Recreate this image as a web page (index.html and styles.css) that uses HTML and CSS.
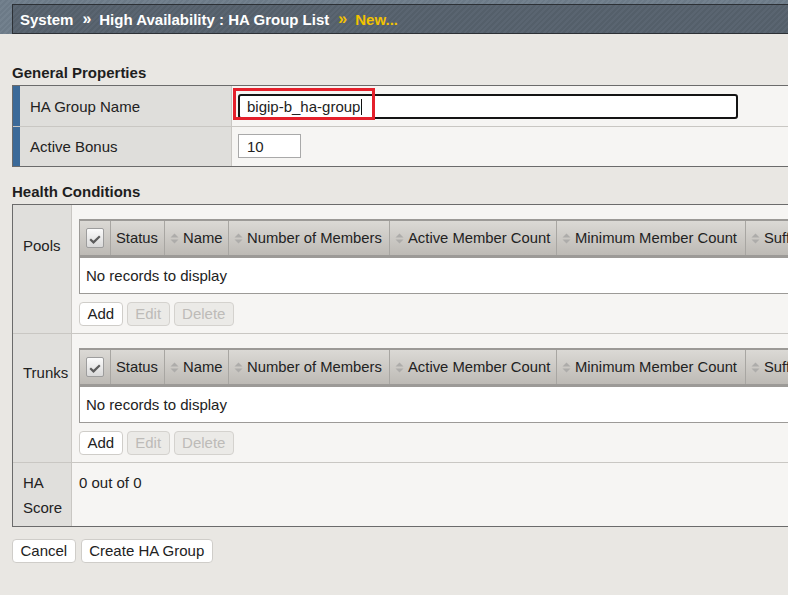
FILE: index.html
```html
<!DOCTYPE html>
<html lang="en">
<head>
<meta charset="utf-8">
<title>HA Group List - New</title>
<link rel="stylesheet" href="styles.css">
</head>
<body>
<header class="topbar">
  <nav class="crumbs">
    <span>System</span><span class="sep">»</span><span>High Availability : HA Group List</span><span class="sep cur">»</span><span class="cur">New...</span>
  </nav>
</header>

<main class="content">
  <h2 class="section first">General Properties</h2>
  <div class="props">
    <div class="prow r1">
      <div class="plabel">HA Group Name</div>
      <div class="pvalue">
        <div class="field wide"><span>bigip-b_ha-group</span><span class="caret"></span></div>
        <div class="highlight"></div>
      </div>
    </div>
    <div class="prow r2">
      <div class="plabel">Active Bonus</div>
      <div class="pvalue">
        <div class="field small">10</div>
      </div>
    </div>
  </div>

  <h2 class="section">Health Conditions</h2>
  <div class="health">
    <div class="hrow">
      <div class="hlabel">Pools</div>
      <div class="hvalue">
        <div class="grid">
          <div class="ghead">
            <div class="gcell c1"><span class="cbox"><svg width="12" height="9" viewBox="0 0 12 9"><path d="M1.2 4.2 L4.5 7.4 L10.8 1.2" fill="none" stroke="#5c5c5c" stroke-width="2.2"/></svg></span></div>
            <div class="gcell c2">Status</div>
            <div class="gcell c3"><svg class="sort" width="9" height="11" viewBox="0 0 9 11"><path d="M0.5 4.5 L4.5 0.5 L8.5 4.5 Z M0.5 6.5 L4.5 10.5 L8.5 6.5 Z" fill="#adacaa"/></svg>Name</div>
            <div class="gcell c4"><svg class="sort" width="9" height="11" viewBox="0 0 9 11"><path d="M0.5 4.5 L4.5 0.5 L8.5 4.5 Z M0.5 6.5 L4.5 10.5 L8.5 6.5 Z" fill="#adacaa"/></svg>Number of Members</div>
            <div class="gcell c5"><svg class="sort" width="9" height="11" viewBox="0 0 9 11"><path d="M0.5 4.5 L4.5 0.5 L8.5 4.5 Z M0.5 6.5 L4.5 10.5 L8.5 6.5 Z" fill="#adacaa"/></svg>Active Member Count</div>
            <div class="gcell c6"><svg class="sort" width="9" height="11" viewBox="0 0 9 11"><path d="M0.5 4.5 L4.5 0.5 L8.5 4.5 Z M0.5 6.5 L4.5 10.5 L8.5 6.5 Z" fill="#adacaa"/></svg>Minimum Member Count</div>
            <div class="gcell c7"><svg class="sort" width="9" height="11" viewBox="0 0 9 11"><path d="M0.5 4.5 L4.5 0.5 L8.5 4.5 Z M0.5 6.5 L4.5 10.5 L8.5 6.5 Z" fill="#adacaa"/></svg>Sufficient Threshold</div>
          </div>
          <div class="gbody">No records to display</div>
        </div>
        <div class="btnrow">
          <button class="btn">Add</button>
          <button class="btn" disabled>Edit</button>
          <button class="btn" disabled>Delete</button>
        </div>
      </div>
    </div>

    <div class="hrow">
      <div class="hlabel trunks">Trunks</div>
      <div class="hvalue">
        <div class="grid">
          <div class="ghead">
            <div class="gcell c1"><span class="cbox"><svg width="12" height="9" viewBox="0 0 12 9"><path d="M1.2 4.2 L4.5 7.4 L10.8 1.2" fill="none" stroke="#5c5c5c" stroke-width="2.2"/></svg></span></div>
            <div class="gcell c2">Status</div>
            <div class="gcell c3"><svg class="sort" width="9" height="11" viewBox="0 0 9 11"><path d="M0.5 4.5 L4.5 0.5 L8.5 4.5 Z M0.5 6.5 L4.5 10.5 L8.5 6.5 Z" fill="#adacaa"/></svg>Name</div>
            <div class="gcell c4"><svg class="sort" width="9" height="11" viewBox="0 0 9 11"><path d="M0.5 4.5 L4.5 0.5 L8.5 4.5 Z M0.5 6.5 L4.5 10.5 L8.5 6.5 Z" fill="#adacaa"/></svg>Number of Members</div>
            <div class="gcell c5"><svg class="sort" width="9" height="11" viewBox="0 0 9 11"><path d="M0.5 4.5 L4.5 0.5 L8.5 4.5 Z M0.5 6.5 L4.5 10.5 L8.5 6.5 Z" fill="#adacaa"/></svg>Active Member Count</div>
            <div class="gcell c6"><svg class="sort" width="9" height="11" viewBox="0 0 9 11"><path d="M0.5 4.5 L4.5 0.5 L8.5 4.5 Z M0.5 6.5 L4.5 10.5 L8.5 6.5 Z" fill="#adacaa"/></svg>Minimum Member Count</div>
            <div class="gcell c7"><svg class="sort" width="9" height="11" viewBox="0 0 9 11"><path d="M0.5 4.5 L4.5 0.5 L8.5 4.5 Z M0.5 6.5 L4.5 10.5 L8.5 6.5 Z" fill="#adacaa"/></svg>Sufficient Threshold</div>
          </div>
          <div class="gbody">No records to display</div>
        </div>
        <div class="btnrow">
          <button class="btn">Add</button>
          <button class="btn" disabled>Edit</button>
          <button class="btn" disabled>Delete</button>
        </div>
      </div>
    </div>

    <div class="hrow score">
      <div class="hlabel">HA<br>Score</div>
      <div class="hvalue">0 out of 0</div>
    </div>
  </div>

  <div class="actions">
    <button class="btn act">Cancel</button>
    <button class="btn act">Create HA Group</button>
  </div>
</main>
</body>
</html>
```

FILE: styles.css
```css
html, body {
  margin: 0;
  padding: 0;
  background: #e9e7e3;
  overflow: hidden;
}

body {
  font-family: "Liberation Sans", Arial, sans-serif;
  font-size: 15px;
  color: #222;
}

/* ---------- top breadcrumb bar ---------- */
.topbar {
  padding: 4px 0 0 12px;
  background: repeating-linear-gradient(135deg, #6c7a87 0 2px, #73818e 2px 4px);
}

.crumbs {
  height: 28px;
  display: flex;
  align-items: center;
  padding-left: 7px;
  border: 1px solid #2c3035;
  border-right: 0;
  background: repeating-linear-gradient(135deg, #545f6a 0 2px, #5a6571 2px 4px);
  color: #fff;
  font-weight: bold;
  font-size: 15px;
  white-space: nowrap;
}

.crumbs .sep {
  margin: 0 8px 0 9px;
  font-size: 16px;
}

.crumbs .cur {
  color: #f2c200;
}

/* ---------- content ---------- */
.content {
  padding-left: 12px;
}

.section {
  margin: 16px 0 4px;
  font-size: 15px;
  line-height: 17px;
  font-weight: bold;
  color: #1e1e1e;
}

.section.first {
  margin-top: 30px;
}

/* ---------- general properties ---------- */
.props {
  border-top: 1px solid #6b6b6b;
  border-bottom: 1px solid #6b6b6b;
  border-left: 1px solid #6b6b6b;
  background: #f6f5f3;
}

.prow {
  display: flex;
}

.prow.r1 { height: 40px; }
.prow.r2 { height: 39px; }

.prow + .prow {
  border-top: 1px solid #c9c7c3;
}

.plabel {
  box-sizing: border-box;
  width: 219px;
  flex: none;
  display: flex;
  align-items: center;
  padding-left: 10px;
  border-left: 7px solid #3b6a99;
  border-right: 1px solid #c9c7c3;
  background: #dfdedb;
}

.pvalue {
  position: relative;
  flex: 1;
  padding-left: 6px;
}

.r1 .pvalue { padding-top: 8px; }
.r2 .pvalue { padding-top: 7px; }

.field {
  box-sizing: border-box;
  display: flex;
  align-items: center;
  background: #fff;
  color: #222;
}

.field.wide {
  width: 500px;
  height: 25px;
  padding-left: 7px;
  border: 2px solid #141414;
  border-radius: 3px;
}

.caret {
  width: 1px;
  height: 16px;
  margin-left: 1px;
  background: #111;
}

.field.small {
  width: 63px;
  height: 24px;
  padding-left: 8px;
  border: 1px solid #a9a9a9;
}

.highlight {
  position: absolute;
  left: 1px;
  top: 2px;
  box-sizing: border-box;
  width: 142px;
  height: 32px;
  border: 3px solid #e4202b;
}

/* ---------- health conditions ---------- */
.health {
  border-top: 1px solid #6b6b6b;
  border-bottom: 1px solid #6b6b6b;
  border-left: 1px solid #6b6b6b;
  background: #f6f5f3;
}

.hrow {
  display: flex;
}

.hrow + .hrow {
  border-top: 1px solid #c9c7c3;
}

.hlabel {
  box-sizing: border-box;
  width: 59px;
  flex: none;
  padding: 32px 0 0 10px;
  line-height: 18px;
  background: #e0dfdc;
  border-right: 1px solid #c9c7c3;
}

.hlabel.trunks {
  padding-top: 30px;
}

.hvalue {
  flex: 1;
  min-width: 0;
  overflow: hidden;
  padding: 14px 0 7px 7px;
}

.score .hlabel,
.score .hvalue {
  padding-top: 7px;
  padding-bottom: 6px;
  line-height: 25px;
}

.grid {
  width: 1000px;
  border-left: 1px solid #9c9a97;
  border-top: 2px solid #9c9a97;
  border-bottom: 1px solid #9c9a97;
  background: #fff;
}

.ghead {
  display: flex;
  height: 34px;
  background: linear-gradient(#dbd9d5, #bdbab5);
  border-bottom: 3px solid #9c9a97;
}

.gcell {
  box-sizing: border-box;
  flex: none;
  display: flex;
  align-items: center;
  padding-left: 5px;
  border-right: 1px solid #a8a6a2;
  font-size: 14.8px;
  color: #222;
  white-space: nowrap;
}

.c1 { width: 31px; justify-content: center; padding-left: 0; }
.c2 { width: 54px; }
.c3 { width: 64px; }
.c4 { width: 161px; }
.c5 { width: 167px; }
.c6 { width: 189px; }
.c7 { width: 334px; }

.sort {
  flex: none;
  margin-right: 4px;
}

.cbox {
  box-sizing: border-box;
  width: 18px;
  height: 20px;
  display: flex;
  align-items: flex-end;
  justify-content: center;
  padding-bottom: 3px;
  border: 1px solid #9d9d9d;
  border-radius: 2px;
  background: linear-gradient(#fbfbfb, #d9d9d9);
}

.gbody {
  height: 35px;
  display: flex;
  align-items: center;
  padding-left: 6px;
}

.btnrow {
  display: flex;
  gap: 4px;
  margin-top: 8px;
}

.btn {
  box-sizing: border-box;
  height: 24px;
  padding: 0 7.5px;
  border: 1px solid #cfcdc9;
  border-radius: 4px;
  background: #fff;
  font-family: "Liberation Sans", Arial, sans-serif;
  font-size: 15px;
  line-height: 22px;
  color: #222;
}

.btn:disabled {
  background: #ebeae7;
  border-color: #d4d2ce;
  color: #bdbbb8;
}

.actions {
  display: flex;
  gap: 5px;
  margin-top: 12px;
}

.btn.act {
  padding: 0 7.5px;
}
```
